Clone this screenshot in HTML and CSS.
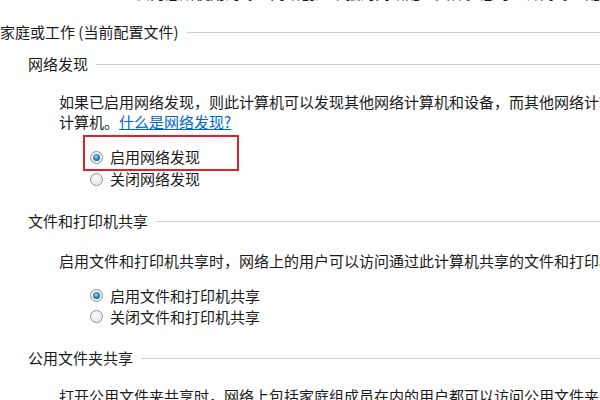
FILE: index.html
```html
<!DOCTYPE html>
<html lang="zh-CN">
<head>
    <meta charset="UTF-8">
    <title>高级共享设置</title>
    <link rel="stylesheet" href="styles.css">
</head>
<body>
    <p class="intro">Windows 会为您所使用的每个网络创建单独的网络配置文件。您可以针对每个配置文件选择特定的选项。</p>

    <!-- 配置文件 -->
    <div class="profile-title">
        <span>家庭或工作 (当前配置文件)</span>
    </div>

    <!-- 网络发现 -->
    <div class="group-title g1">
        <span>网络发现</span>
    </div>
    <p class="desc d1">如果已启用网络发现，则此计算机可以发现其他网络计算机和设备，而其他网络计算机亦可发现此<br>计算机。<a href="#" class="help-link">什么是网络发现?</a></p>
    <div class="options o1">
        <label class="option"><span class="radio checked"></span>启用网络发现</label>
        <label class="option"><span class="radio"></span>关闭网络发现</label>
        <div class="highlight"></div>
    </div>

    <!-- 文件和打印机共享 -->
    <div class="group-title g2">
        <span>文件和打印机共享</span>
    </div>
    <p class="desc d2">启用文件和打印机共享时，网络上的用户可以访问通过此计算机共享的文件和打印机。</p>
    <div class="options o2">
        <label class="option"><span class="radio checked"></span>启用文件和打印机共享</label>
        <label class="option"><span class="radio"></span>关闭文件和打印机共享</label>
    </div>

    <!-- 公用文件夹共享 -->
    <div class="group-title g3">
        <span>公用文件夹共享</span>
    </div>
    <p class="desc d3">打开公用文件夹共享时，网络上包括家庭组成员在内的用户都可以访问公用文件夹中的文件。</p>
</body>
</html>
```

FILE: styles.css
```css
body {
    margin: 0;
    background: #ffffff;
    color: #1a1a1a;
    font-family: "Microsoft YaHei", "Noto Sans CJK SC", "Noto Sans", sans-serif;
    font-size: 15px;
    line-height: 20px;
    overflow: hidden;
    white-space: nowrap;
}

p {
    margin: 0;
}

/* Верхняя обрезанная строка */
.intro {
    margin-top: -17px;
    padding-left: 68px;
}

/* Заголовки с линией */
.profile-title,
.group-title {
    display: flex;
    align-items: center;
    gap: 8px;
}

.profile-title::after,
.group-title::after {
    content: "";
    flex: 1;
    border-top: 1px solid #cfcfcf;
}

.profile-title {
    margin-top: 19px;
}

.group-title {
    padding-left: 28px;
}

.g1 { margin-top: 12px; }
.g2 { margin-top: 21px; }
.g3 { margin-top: 21px; }

/* Описание */
.desc {
    padding-left: 59px;
}

.d1 { margin-top: 18px; }
.d2 { margin-top: 20px; }
.d3 { margin-top: 18px; }

.help-link {
    color: #0066cc;
    text-decoration: underline;
}

/* Радио-кнопки */
.options {
    position: relative;
    display: flex;
    flex-direction: column;
    padding-left: 90px;
}

.o1 { margin-top: 14px; }
.o2 { margin-top: 14px; }

.option {
    display: flex;
    align-items: center;
    gap: 7px;
    height: 22px;
}

.o2 .option {
    height: 21px;
}

.radio {
    width: 11px;
    height: 11px;
    border-radius: 50%;
    border: 1px solid #8e8f8f;
    background: radial-gradient(circle at 40% 35%, #ffffff 0%, #eaeaea 55%, #d4d4d4 100%);
    box-shadow: inset 0 0 0 1px #f4f4f4;
    position: relative;
}

.radio.checked::after {
    content: "";
    position: absolute;
    left: 2px;
    top: 2px;
    width: 7px;
    height: 7px;
    border-radius: 50%;
    background: radial-gradient(circle at 45% 40%, #a6dcf7 0%, #2a8ac8 45%, #0b3e66 100%);
}

/* Красная рамка-выделение */
.highlight {
    position: absolute;
    left: 83px;
    top: -11px;
    width: 152px;
    height: 32px;
    border: 2px solid #e0202a;
    pointer-events: none;
}
```
